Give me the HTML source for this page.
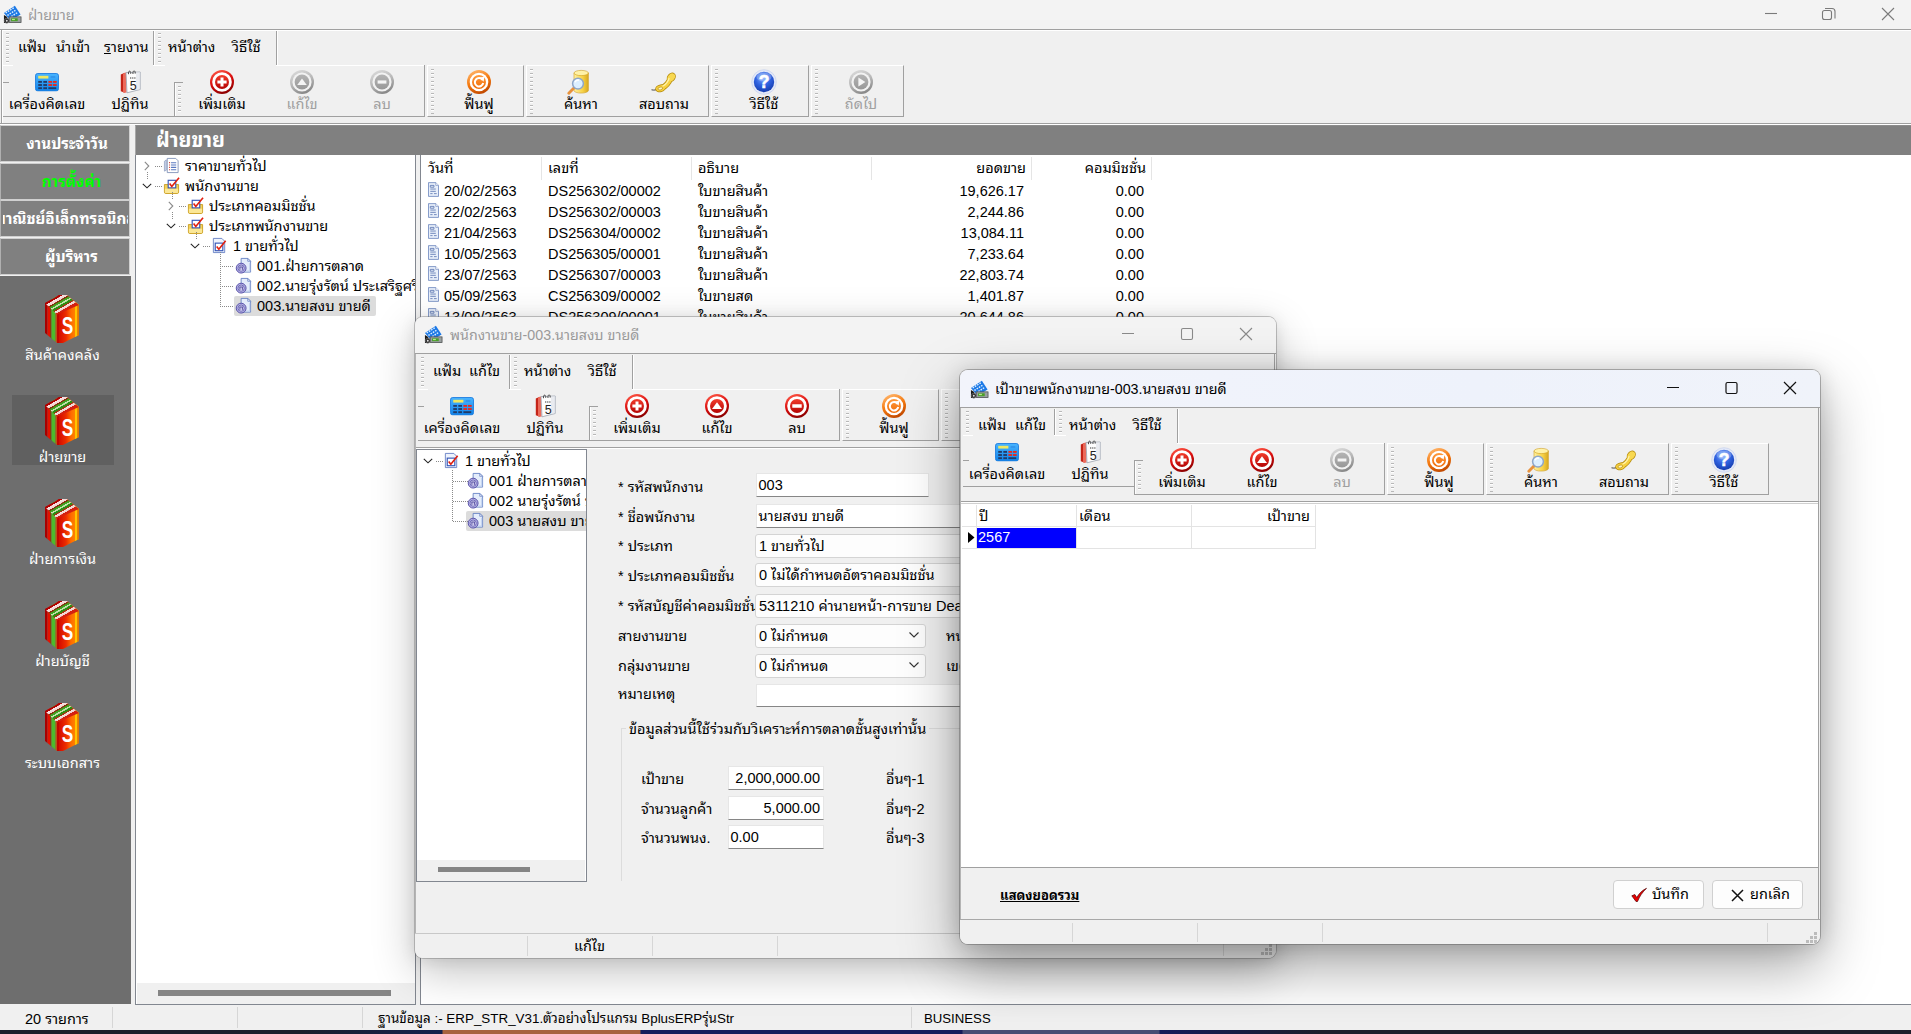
<!DOCTYPE html>
<html lang="th"><head><meta charset="utf-8"><title>ฝ่ายขาย</title>
<style>
*{box-sizing:border-box}
html,body{margin:0;padding:0}
body{width:1911px;height:1034px;overflow:hidden;background:#f0f0f0;position:relative;
 font-family:"Liberation Sans","Noto Sans Thai Looped","Loma","Tahoma",sans-serif;font-size:14.5px;color:#000;line-height:18px}
.a{position:absolute}
.t{position:absolute;white-space:nowrap;line-height:20px;height:20px}
.c{text-align:center}
.r{text-align:right}
.b{font-weight:bold}
.hl{position:absolute;height:1px}
.vl{position:absolute;width:1px}
.g{background:#a0a0a0}.w{background:#fff}
.grip{position:absolute;width:3px;background-image:repeating-linear-gradient(180deg,#b8b8b8 0 1px,#fff 1px 2px,transparent 2px 4px)}
.sec{position:absolute;border-top:1px solid #fff;border-left:1px solid #fff;border-right:1px solid #a0a0a0;border-bottom:1px solid #a0a0a0}
.tb{position:absolute;width:90px;text-align:center;white-space:nowrap;line-height:18px}
.dis{color:#a0a0a0}
.win{position:absolute;border-radius:8px;background:#f0f0f0;box-shadow:0 0 0 1px rgba(90,90,90,.45),0 22px 58px rgba(0,0,0,.36),0 2px 22px rgba(0,0,0,.16);overflow:hidden}
.win.ina{box-shadow:0 0 0 1px rgba(110,110,110,.4),0 14px 44px rgba(0,0,0,.24),0 2px 16px rgba(0,0,0,.10)}
.cmb{border:1px solid #d4d4d4 !important;border-radius:3px;background:#fdfdfd !important;padding-left:3px !important}
.fld{position:absolute;background:#fff;border:1px solid #e6e6e6;border-bottom:1px solid #868686;height:24px;line-height:23px;padding-left:1.5px;white-space:nowrap;overflow:hidden}
.sbd{position:absolute;width:1px;background:#d6d6d6}
.btn{position:absolute;height:29px;background:#fdfdfd;border:1px solid #d0d0d0;border-radius:4px;line-height:27px;white-space:nowrap}
.sbtn{position:absolute;left:0;width:130px;height:37px;background:#808080;border:1px solid #d0d0d0;border-left-color:#b0b0b0;color:#fff;font-weight:bold;font-size:15.2px;line-height:35px;text-align:center;white-space:nowrap;overflow:hidden}
.lbl{position:absolute;left:0;width:125px;text-align:center;color:#fff;font-size:14.5px;white-space:nowrap;line-height:20px}
.tr{position:absolute;white-space:nowrap;line-height:20px;height:20px}
svg{position:absolute;overflow:visible}
</style></head>
<body>

<svg width="0" height="0" style="position:absolute">
<defs>
<linearGradient id="gRed" x1="0.2" y1="0" x2="0.6" y2="1"><stop offset="0" stop-color="#ff5a48"/><stop offset=".5" stop-color="#d80c0c"/><stop offset="1" stop-color="#8a0000"/></linearGradient>
<linearGradient id="gRed2" x1="0" y1="0" x2="0" y2="1"><stop offset="0" stop-color="#f23c2c"/><stop offset="1" stop-color="#b40404"/></linearGradient>
<linearGradient id="gGray2" x1="0" y1="0" x2="0" y2="1"><stop offset="0" stop-color="#b4b4b4"/><stop offset="1" stop-color="#989898"/></linearGradient>
<linearGradient id="gOr2" x1="0" y1="0" x2="0" y2="1"><stop offset="0" stop-color="#ff9a3c"/><stop offset="1" stop-color="#f06c08"/></linearGradient>
<linearGradient id="gGray" x1="0.2" y1="0" x2="0.6" y2="1"><stop offset="0" stop-color="#dcdcdc"/><stop offset=".5" stop-color="#b8b8b8"/><stop offset="1" stop-color="#868686"/></linearGradient>
<linearGradient id="gOr" x1="0.2" y1="0" x2="0.6" y2="1"><stop offset="0" stop-color="#ffb870"/><stop offset=".5" stop-color="#f57a10"/><stop offset="1" stop-color="#c04800"/></linearGradient>
<radialGradient id="gBlue" cx="45%" cy="30%" r="75%"><stop offset="0" stop-color="#7aa8ff"/><stop offset=".5" stop-color="#2f62e0"/><stop offset="1" stop-color="#1238a8"/></radialGradient>
<linearGradient id="gCalc" x1="0" y1="0" x2="0" y2="1"><stop offset="0" stop-color="#49b4ff"/><stop offset="1" stop-color="#1183e8"/></linearGradient>
<linearGradient id="gCyl" x1="0" y1="0" x2="1" y2="0"><stop offset="0" stop-color="#fff0a0"/><stop offset=".6" stop-color="#f7d247"/><stop offset="1" stop-color="#d8a820"/></linearGradient>
<linearGradient id="gBk1" x1="0" y1="0" x2="1" y2="0"><stop offset="0" stop-color="#d40c00"/><stop offset=".35" stop-color="#ec2c00"/><stop offset=".6" stop-color="#ff6a00"/><stop offset="1" stop-color="#ff9800"/></linearGradient>
<linearGradient id="gBkTop" gradientUnits="userSpaceOnUse" x1="7" y1="4" x2="14.700" y2="17.500"><stop offset="0" stop-color="#b00000"/><stop offset=".12" stop-color="#b00000"/><stop offset=".13" stop-color="#f8e4e4"/><stop offset=".3" stop-color="#f4d0d0"/><stop offset=".31" stop-color="#80340c"/><stop offset=".38" stop-color="#80340c"/><stop offset=".39" stop-color="#3c9c1c"/><stop offset=".5" stop-color="#44a824"/><stop offset=".51" stop-color="#cfeac0"/><stop offset=".6" stop-color="#a8d890"/><stop offset=".61" stop-color="#2c8c14"/><stop offset=".72" stop-color="#2c8c14"/><stop offset=".73" stop-color="#a43410"/><stop offset=".79" stop-color="#a43410"/><stop offset=".8" stop-color="#f8e4e4"/><stop offset=".94" stop-color="#f0c8c8"/><stop offset=".95" stop-color="#d42010"/><stop offset="1" stop-color="#d42010"/></linearGradient>
</defs>
<symbol id="i-add" viewBox="0 0 26 26"><circle cx="13" cy="13" r="12" fill="url(#gRed)"/><circle cx="13" cy="13" r="9.800" fill="#fff"/><circle cx="13" cy="13" r="7" fill="url(#gRed2)"/><path d="M8.400 13h9.200M13 8.400v9.200" stroke="#fff" stroke-width="3"/></symbol>
<symbol id="i-edit" viewBox="0 0 26 26"><circle cx="13" cy="13" r="12" fill="url(#gRed)"/><circle cx="13" cy="13" r="9.800" fill="#fff"/><circle cx="13" cy="13" r="7" fill="url(#gRed2)"/><path d="M8 16L13 9.200 18 16z" fill="#fff"/></symbol>
<symbol id="i-del" viewBox="0 0 26 26"><circle cx="13" cy="13" r="12" fill="url(#gRed)"/><circle cx="13" cy="13" r="9.800" fill="#fff"/><circle cx="13" cy="13" r="7" fill="url(#gRed2)"/><path d="M8.300 13h9.400" stroke="#fff" stroke-width="3.400"/></symbol>
<symbol id="i-editg" viewBox="0 0 26 26"><circle cx="13" cy="13" r="12" fill="url(#gGray)"/><circle cx="13" cy="13" r="9.600" fill="#f2f2f2"/><circle cx="13" cy="13" r="7.400" fill="url(#gGray2)"/><path d="M8.200 16L13 9.400l4.800 6.600z" fill="#f4f4f4"/></symbol>
<symbol id="i-delg" viewBox="0 0 26 26"><circle cx="13" cy="13" r="12" fill="url(#gGray)"/><circle cx="13" cy="13" r="9.600" fill="#f2f2f2"/><circle cx="13" cy="13" r="7.400" fill="url(#gGray2)"/><path d="M8.600 13h8.800" stroke="#f4f4f4" stroke-width="3.200"/></symbol>
<symbol id="i-nextg" viewBox="0 0 26 26"><circle cx="13" cy="13" r="12" fill="url(#gGray)"/><circle cx="13" cy="13" r="9.600" fill="#f2f2f2"/><circle cx="13" cy="13" r="7.400" fill="url(#gGray2)"/><path d="M10.400 8.400L17.400 13l-7 4.600z" fill="#f4f4f4"/></symbol>
<symbol id="i-refresh" viewBox="0 0 26 26"><circle cx="13" cy="13" r="12" fill="url(#gOr)"/><circle cx="13" cy="13" r="9.300" fill="#fff"/><circle cx="13" cy="13" r="7" fill="url(#gOr2)"/><path d="M16.600 11A4.200 4.200 0 1 0 17.200 14" fill="none" stroke="#fff" stroke-width="2"/><path d="M13.400 8.600l5-.8-.8 5z" fill="#fff"/></symbol>
<symbol id="i-help" viewBox="0 0 26 26"><circle cx="13" cy="13" r="12.300" fill="#e2e8f8" stroke="#ccd4ee" stroke-width=".8"/><circle cx="13" cy="13" r="10.200" fill="url(#gBlue)"/><ellipse cx="13" cy="8" rx="7.500" ry="4.500" fill="#fff" opacity=".25"/><text x="13" y="19.300" text-anchor="middle" font-family="Liberation Sans, sans-serif" font-weight="bold" font-size="17.500" fill="#fff" stroke="#fff" stroke-width=".5">?</text></symbol>
<symbol id="i-calc" viewBox="0 0 26 20"><rect x=".5" y=".5" width="25" height="19" rx="2.5" fill="url(#gCalc)" stroke="#1f7fe0"/><rect x="3.5" y="3" width="11" height="3" fill="#f0e860"/><rect x="17" y="3.5" width="5" height="1.6" fill="#3090e8"/><g fill="#223a66"><rect x="3.5" y="8.6" width="4" height="2"/><rect x="9" y="8.6" width="4" height="2"/><rect x="3.5" y="12" width="4" height="2"/><rect x="9" y="12" width="4" height="2"/><rect x="3.5" y="15.4" width="4" height="2"/><rect x="9" y="15.4" width="4" height="2"/><rect x="14.5" y="15.4" width="8.5" height="2"/></g><g fill="#e8281c"><rect x="14.5" y="8.6" width="4" height="2"/><rect x="19.5" y="8.6" width="4" height="2"/><rect x="14.5" y="12" width="4" height="2"/><rect x="19.5" y="12" width="4" height="2"/></g></symbol>
<symbol id="i-cal" viewBox="0 0 21 24"><path d="M.8 4.500l4-1.800v20l-4-1.400z" fill="#c42418"/><path d="M3 3.600l3.500-1.400v20.500L3 22.500z" fill="#ec6a5a"/><path d="M6 2.600L20.200 2v17.500L7 22.800z" fill="#fdfdfd" stroke="#9aa2ae" stroke-width=".8"/><path d="M20 2v17.300l-4 1V2.200z" fill="#dfe3ea" opacity=".7"/><path d="M8.500 4.200c-.8-4 2.800-4 2.200-.4M13 4c-.8-4 2.800-4 2.200-.4" stroke="#444" stroke-width="1" fill="none"/><text x="13.300" y="19.500" text-anchor="middle" font-family="Liberation Sans, sans-serif" font-size="12.500" fill="#222">5</text><path d="M10 8h6" stroke="#777" stroke-width="1.600" stroke-dasharray="1.300 .8"/></symbol>
<symbol id="i-search" viewBox="0 0 24 26"><path d="M7 4v17.500a7.200 2.600 0 0 0 14.400 0V4z" fill="url(#gCyl)" stroke="#d0a020" stroke-width=".6"/><ellipse cx="14.200" cy="4" rx="7.200" ry="2.600" fill="#fff2a8" stroke="#d0a020" stroke-width=".6"/><path d="M1.800 24.300l5.400-5.600" stroke="#e8923c" stroke-width="2.800" stroke-linecap="round"/><circle cx="11" cy="14.600" r="5.400" fill="#dcefff" stroke="#8ea6c8" stroke-width="1.500"/><path d="M8 13.200a3.400 3.400 0 0 1 4-2" stroke="#fff" stroke-width="1.500" fill="none"/></symbol>
<symbol id="i-phone" viewBox="0 0 26 21"><path d="M.5 17.800c2.500.6 4.500.2 6.500-.8" stroke="#333" stroke-width=".9" fill="none"/><g stroke="#b48a0c" stroke-width="1.600" stroke-linejoin="round"><path d="M10 16.500Q17 13.500 19.500 6" stroke-width="5.600" stroke-linecap="round" fill="none"/><ellipse cx="9.500" cy="16.300" rx="4.600" ry="3" transform="rotate(-15 9.500 16.300)" fill="#b48a0c"/><ellipse cx="20.300" cy="5.300" rx="4.300" ry="3.300" transform="rotate(-50 20.300 5.300)" fill="#b48a0c"/></g><path d="M10 16.500Q17 13.500 19.500 6" stroke="#f6d040" stroke-width="4" stroke-linecap="round" fill="none"/><ellipse cx="9.500" cy="16.300" rx="4.600" ry="3" transform="rotate(-15 9.500 16.300)" fill="#f6d040"/><ellipse cx="20.300" cy="5.300" rx="4.300" ry="3.300" transform="rotate(-50 20.300 5.300)" fill="#f8d850"/><path d="M12 14Q16.500 11.500 18 6.500" stroke="#fff2a8" stroke-width="1.300" stroke-linecap="round" fill="none"/><ellipse cx="9.300" cy="16.500" rx="2.400" ry="1.400" transform="rotate(-15 9.300 16.500)" fill="#fff6c0" stroke="#b48a0c" stroke-width=".6"/></symbol>
<symbol id="i-app" viewBox="0 0 20 20"><path d="M1 8.500L12.500.8l6 9.200L8 16.500z" fill="#1b78e6"/><path d="M2.800 8.400l9.400-6M4.600 11l9.400-6M6.400 13.600l9.400-6" stroke="#d8ecff" stroke-width="1.500" stroke-dasharray="1.700 1.100"/><rect x="6.500" y="12.500" width="12.500" height="6" fill="#9aa0a0" stroke="#4a4e4e" stroke-width=".8"/><rect x="8.500" y="14" width="7" height="3" fill="#4aa028"/><rect x="9.500" y="14.600" width="3" height="1.300" fill="#b8e890"/><path d="M1 10.500l3.500 2v6.500H1z" fill="#1a1a1a"/><circle cx="4" cy="16.500" r="2.600" fill="#2a2a2a" stroke="#777" stroke-width=".7"/><circle cx="4" cy="16.500" r="1" fill="#ddd"/></symbol>
<symbol id="i-books" viewBox="0 0 34 48"><clipPath id="cBk"><path d="M0 8L14 0h8l12 10v30L18 48h-6L0 38z"/></clipPath><g clip-path="url(#cBk)"><rect x="0" y="0" width="2.500" height="48" fill="#a80000"/><rect x="2.500" y="0" width="2.500" height="48" fill="#e41200"/><rect x="5" y="0" width="1.500" height="48" fill="#8a3a10"/><rect x="6.500" y="0" width="4" height="48" fill="#4cba2c"/><rect x="10.500" y="0" width="1.500" height="48" fill="#b45a14"/><rect x="12" y="0" width="2" height="48" fill="#c40400"/><rect x="14" y="0" width="20" height="48" fill="url(#gBk1)"/><rect x="30" y="0" width="2.300" height="48" fill="#ffc400"/><rect x="32.300" y="0" width="1.700" height="48" fill="#e27a00"/><path d="M0 8L14 0h8l12 10L12 19.500z" fill="url(#gBkTop)"/><path d="M0 38l12 10h-6L0 43zM34 40L18 48h8l8-4z" fill="#6e6e6e" opacity="0"/></g><text transform="translate(22.500 38.500) scale(.72 1)" text-anchor="middle" font-family="Liberation Sans, sans-serif" font-weight="bold" font-size="24" fill="#fff">S</text></symbol>
<symbol id="t-list" viewBox="0 0 18 18"><path d="M1.500 4.500l2-1.500v11l-2 1z" fill="#c8d4ea" stroke="#7a8cb4" stroke-width=".6"/><path d="M4.500 1.500h9l2.500 2.500v12.500h-11.500z" fill="#fff" stroke="#7a8cb4" stroke-width=".9"/><path d="M6.500 6h1M6.500 8.500h1M6.500 11h1M6.500 13.500h1" stroke="#d03020" stroke-width="1.200"/><path d="M8.500 6h5.500M8.500 8.500h5.500M8.500 11h5.500M8.500 13.500h5.500" stroke="#5878c0" stroke-width="1.100"/></symbol>
<symbol id="t-fold" viewBox="0 0 18 18"><path d="M1.500 8h15v8a1.500 1.500 0 0 1-1.500 1.500h-12a1.500 1.500 0 0 1-1.500-1.500z" fill="#f4d25a" stroke="#c89a18" stroke-width=".9"/><path d="M2 12.500h14v3.500a1 1 0 0 1-1 1H3a1 1 0 0 1-1-1z" fill="#fbe796"/><rect x="5.500" y="3.500" width="8" height="8" fill="#fff" stroke="#3456b8" stroke-width="1.200"/><path d="M7 7l2.300 3L17 .8" stroke="#e02010" stroke-width="1.700" fill="none"/></symbol>
<symbol id="t-chk" viewBox="0 0 18 18"><path d="M2.500 1.500h9l3 3v12h-12z" fill="#eef3fc" stroke="#5e78c0" stroke-width=".9"/><rect x="4.500" y="6.500" width="8" height="8" fill="#fff" stroke="#3456b8" stroke-width="1.200"/><path d="M6 10l2.300 3L15.500 4" stroke="#e02010" stroke-width="1.700" fill="none"/></symbol>
<symbol id="t-emp" viewBox="0 0 18 18"><path d="M6.500 1.500h7l3 3v11.500h-10z" fill="#e4edfb" stroke="#5f7cc0" stroke-width=".9"/><path d="M13.500 1.500v3h3z" fill="#fff" stroke="#5f7cc0" stroke-width=".8"/><path d="M8 15h7.500V6" stroke="#c4d4f0" stroke-width="1.200" fill="none"/><circle cx="6.500" cy="11.800" r="5.200" fill="#b4b0e4" stroke="#544ea6" stroke-width="1"/><circle cx="6.500" cy="11.800" r="3.300" fill="#dcdaf6" stroke="#544ea6" stroke-width=".8"/><path d="M5.200 13.600v-2.800M7.800 13.600v-2.800M4.600 10.600h3.800" stroke="#3c3490" stroke-width=".9"/></symbol>
<symbol id="t-doc" viewBox="0 0 12 16"><path d="M.5.500h8l3 3v12H.5z" fill="#e8effa" stroke="#6a84bc" stroke-width=".9"/><path d="M8.500.500v3h3" fill="#fff" stroke="#6a84bc" stroke-width=".7"/><path d="M2.500 3.500h4v2h-4zM2.500 7.500h6M2.500 10h6M2.500 12.500h2.500M6.500 12.500h3" stroke="#5a74b0" stroke-width=".9" fill="none"/></symbol>
</defs>
</svg>

<div class="a" style="left:0;top:0;width:1911px;height:29px;background:#f3f3f3"></div>
<svg style="left:3px;top:5px" width="19" height="19"><use href="#i-app"/></svg>
<div class="t " style="left:28px;top:5px;color:#9a9a9a;font-size:14.25px">ฝ่ายขาย</div>
<svg style="left:1760px;top:0" width="151" height="29" fill="none" stroke="#7a7a7a" stroke-width="1.1"><path d="M5 13.5h12"/><rect x="62.5" y="10.5" width="9" height="9" rx="2"/><path d="M65 8.500h7a3 3 0 0 1 3 3v7"/><path d="M122 8l12 12M134 8l-12 12"/></svg>
<div class="hl g" style="left:0px;top:29px;width:1911px"></div><div class="hl w" style="left:0px;top:30px;width:1911px"></div>
<div class="vl g" style="left:1px;top:30px;height:95px"></div><div class="vl w" style="left:2px;top:31px;height:94px"></div>
<div class="grip" style="left:6px;top:33px;height:30px"></div><div class="t " style="left:18px;top:37px;">แฟ้ม</div><div class="t " style="left:56px;top:37px;">นำเข้า</div><div class="t " style="left:104px;top:37px;"><u>ร</u>ายงาน</div><div class="vl g" style="left:153px;top:31px;height:34px"></div><div class="vl w" style="left:154px;top:31px;height:34px"></div><div class="grip" style="left:158px;top:33px;height:30px"></div><div class="t " style="left:168px;top:37px;">หน้าต่าง</div><div class="t " style="left:232px;top:37px;">วิธีใช้</div><div class="vl g" style="left:276px;top:31px;height:34px"></div><div class="vl w" style="left:277px;top:31px;height:34px"></div><div class="hl w" style="left:3px;top:65px;width:10px"></div><div class="hl w" style="left:153px;top:65px;width:12px"></div><div class="hl g" style="left:3px;top:82px;width:6px"></div><svg style="left:35.0px;top:72.8px" width="24" height="18.5"><use href="#i-calc"/></svg><div class="tb" style="left:2px;top:95px">เครื่องคิดเลข</div><svg style="left:119.5px;top:70.0px" width="21" height="24"><use href="#i-cal"/></svg><div class="tb" style="left:85px;top:95px">ปฏิทิน</div><div class="hl g" style="left:3px;top:116px;width:171px"></div><div class="vl g" style="left:174px;top:82px;height:35px"></div><div class="hl g" style="left:174px;top:82px;width:9px"></div><div class="vl w" style="left:175px;top:83px;height:33px"></div><div class="grip" style="left:178px;top:86px;height:28px"></div><div class="hl w" style="left:276px;top:65px;width:148px"></div><div class="hl g" style="left:174px;top:116px;width:251px"></div><div class="vl g" style="left:424px;top:65px;height:52px"></div><svg style="left:209.0px;top:69.0px" width="26" height="26"><use href="#i-add"/></svg><div class="tb" style="left:177px;top:95px">เพิ่มเติม</div><svg style="left:289.0px;top:69.0px" width="26" height="26"><use href="#i-editg"/></svg><div class="tb dis" style="left:257px;top:95px">แก้ไข</div><svg style="left:369.0px;top:69.0px" width="26" height="26"><use href="#i-delg"/></svg><div class="tb dis" style="left:337px;top:95px">ลบ</div><div class="sec" style="left:427px;top:65px;width:97px;height:52px"></div><div class="grip" style="left:431px;top:69px;height:45px"></div><svg style="left:466.0px;top:69.0px" width="26" height="26"><use href="#i-refresh"/></svg><div class="tb" style="left:434px;top:95px">ฟื้นฟู</div><div class="sec" style="left:526px;top:65px;width:183px;height:52px"></div><div class="grip" style="left:530px;top:69px;height:45px"></div><svg style="left:567.0px;top:69.0px" width="24" height="26"><use href="#i-search"/></svg><div class="tb" style="left:536px;top:95px">ค้นหา</div><svg style="left:651.0px;top:72.0px" width="26" height="21"><use href="#i-phone"/></svg><div class="tb" style="left:619px;top:95px">สอบถาม</div><div class="sec" style="left:711px;top:65px;width:98px;height:52px"></div><div class="grip" style="left:715px;top:69px;height:45px"></div><svg style="left:751.0px;top:69.0px" width="26" height="26"><use href="#i-help"/></svg><div class="tb" style="left:719px;top:95px">วิธีใช้</div><div class="sec" style="left:811px;top:65px;width:93px;height:52px"></div><div class="grip" style="left:815px;top:69px;height:45px"></div><svg style="left:848.0px;top:69.0px" width="26" height="26"><use href="#i-nextg"/></svg><div class="tb dis" style="left:816px;top:95px">ถัดไป</div>
<div class="hl g" style="left:0px;top:123px;width:1911px"></div><div class="hl w" style="left:0px;top:124px;width:1911px"></div>
<div class="a" style="left:0;top:125px;width:131px;height:879px;background:#6e6e6e"></div>
<div class="a" style="left:0;top:125px;width:131px;height:151px;background:#f0f0f0"></div>
<div class="sbtn" style="top:125px;color:#fff;padding-left:4px">งานประจำวัน</div>
<div class="sbtn" style="top:163px;color:#0f0;padding-left:13px">การตั้งค่า</div>
<div class="sbtn" style="top:200px;color:#fff;padding-left:0px"><div class="a" style="left:2px;top:0;width:125px;height:35px;overflow:hidden"><span style="position:absolute;left:-8.5px;top:0">พาณิชย์อิเล็กทรอนิกส์</span></div></div>
<div class="sbtn" style="top:238px;color:#fff;padding-left:13px">ผู้บริหาร</div>
<div class="a" style="left:12px;top:395px;width:102px;height:70px;background:#606060"></div>
<svg style="left:45px;top:295px" width="34" height="48"><use href="#i-books"/></svg>
<div class="lbl" style="top:345px">สินค้าคงคลัง</div>
<svg style="left:45px;top:397px" width="34" height="48"><use href="#i-books"/></svg>
<div class="lbl" style="top:447px">ฝ่ายขาย</div>
<svg style="left:45px;top:499px" width="34" height="48"><use href="#i-books"/></svg>
<div class="lbl" style="top:549px">ฝ่ายการเงิน</div>
<svg style="left:45px;top:601px" width="34" height="48"><use href="#i-books"/></svg>
<div class="lbl" style="top:651px">ฝ่ายบัญชี</div>
<svg style="left:45px;top:703px" width="34" height="48"><use href="#i-books"/></svg>
<div class="lbl" style="top:753px">ระบบเอกสาร</div>
<div class="a" style="left:135px;top:125px;width:1776px;height:30px;background:#808080;border-left:1px solid #a8a8a8;border-top:1px solid #8c8c8c"></div>
<div class="t b" style="left:156px;top:130px;color:#fff;font-size:20px;line-height:24px;height:24px;top:128px">ฝ่ายขาย</div>
<div class="a" style="left:135px;top:155px;width:281px;height:850px;background:#fff;border:1px solid #828790;border-top:none"></div>
<div class="a" style="left:137px;top:983px;width:278px;height:21px;background:#f0f0f0"></div>
<div class="a" style="left:158px;top:990px;width:233px;height:6px;background:#858585"></div>
<div class="a" style="left:137px;top:155px;width:278px;height:828px;overflow:hidden"><svg style="left:7px;top:6px" width="6" height="10" fill="none" stroke="#8a8a8a" stroke-width="1.1"><path d="M.8.8l4 4.200-4 4.200"/></svg><div class="a" style="left:18px;top:11px;width:8px;height:1px;background-image:repeating-linear-gradient(90deg,#8a8a8a 0 1px,transparent 1px 2px)"></div><svg style="left:26px;top:2px" width="17" height="17"><use href="#t-list"/></svg><div class="tr" style="left:48px;top:1px">ราคาขายทั่วไป</div><svg style="left:5px;top:28px" width="10" height="6" fill="none" stroke="#222" stroke-width="1.1"><path d="M.8.8l4.200 4 4.200-4"/></svg><div class="a" style="left:18px;top:31px;width:8px;height:1px;background-image:repeating-linear-gradient(90deg,#8a8a8a 0 1px,transparent 1px 2px)"></div><svg style="left:26px;top:22px" width="17" height="17"><use href="#t-fold"/></svg><div class="tr" style="left:48px;top:21px">พนักงานขาย</div><svg style="left:31px;top:46px" width="6" height="10" fill="none" stroke="#8a8a8a" stroke-width="1.1"><path d="M.8.8l4 4.200-4 4.200"/></svg><div class="a" style="left:42px;top:51px;width:8px;height:1px;background-image:repeating-linear-gradient(90deg,#8a8a8a 0 1px,transparent 1px 2px)"></div><svg style="left:50px;top:42px" width="17" height="17"><use href="#t-fold"/></svg><div class="tr" style="left:72px;top:41px">ประเภทคอมมิชชั่น</div><svg style="left:29px;top:68px" width="10" height="6" fill="none" stroke="#222" stroke-width="1.1"><path d="M.8.8l4.200 4 4.200-4"/></svg><div class="a" style="left:42px;top:71px;width:8px;height:1px;background-image:repeating-linear-gradient(90deg,#8a8a8a 0 1px,transparent 1px 2px)"></div><svg style="left:50px;top:62px" width="17" height="17"><use href="#t-fold"/></svg><div class="tr" style="left:72px;top:61px">ประเภทพนักงานขาย</div><svg style="left:53px;top:88px" width="10" height="6" fill="none" stroke="#222" stroke-width="1.1"><path d="M.8.8l4.200 4 4.200-4"/></svg><div class="a" style="left:66px;top:91px;width:8px;height:1px;background-image:repeating-linear-gradient(90deg,#8a8a8a 0 1px,transparent 1px 2px)"></div><svg style="left:74px;top:82px" width="17" height="17"><use href="#t-chk"/></svg><div class="tr" style="left:96px;top:81px">1 ขายทั่วไป</div><div class="a" style="left:83px;top:111px;width:14px;height:1px;background-image:repeating-linear-gradient(90deg,#8a8a8a 0 1px,transparent 1px 2px)"></div><svg style="left:98px;top:102px" width="17" height="17"><use href="#t-emp"/></svg><div class="tr" style="left:120px;top:101px">001.ฝ่ายการตลาด</div><div class="a" style="left:83px;top:131px;width:14px;height:1px;background-image:repeating-linear-gradient(90deg,#8a8a8a 0 1px,transparent 1px 2px)"></div><svg style="left:98px;top:122px" width="17" height="17"><use href="#t-emp"/></svg><div class="tr" style="left:120px;top:121px">002.นายรุ่งรัตน์ ประเสริฐศรี</div><div class="a" style="left:83px;top:151px;width:14px;height:1px;background-image:repeating-linear-gradient(90deg,#8a8a8a 0 1px,transparent 1px 2px)"></div><div class="a" style="left:97px;top:141px;width:142px;height:20px;background:#dcdcdc;border-radius:2px"></div><svg style="left:98px;top:142px" width="17" height="17"><use href="#t-emp"/></svg><div class="tr" style="left:120px;top:141px">003.นายสงบ ขายดี</div><div class="a" style="left:10px;top:17px;width:1px;height:8px;background-image:repeating-linear-gradient(180deg,#8a8a8a 0 1px,transparent 1px 2px)"></div><div class="a" style="left:35px;top:37px;width:1px;height:8px;background-image:repeating-linear-gradient(180deg,#8a8a8a 0 1px,transparent 1px 2px)"></div><div class="a" style="left:35px;top:57px;width:1px;height:8px;background-image:repeating-linear-gradient(180deg,#8a8a8a 0 1px,transparent 1px 2px)"></div><div class="a" style="left:59px;top:77px;width:1px;height:8px;background-image:repeating-linear-gradient(180deg,#8a8a8a 0 1px,transparent 1px 2px)"></div><div class="a" style="left:83px;top:97px;width:1px;height:54px;background-image:repeating-linear-gradient(180deg,#8a8a8a 0 1px,transparent 1px 2px)"></div></div>
<div class="a" style="left:420px;top:155px;width:1491px;height:850px;background:#fff;border-left:1px solid #828790;border-bottom:1px solid #828790"></div>
<div class="vl" style="background:#e5e5e5;left:541px;top:157px;height:23px"></div>
<div class="vl" style="background:#e5e5e5;left:691px;top:157px;height:23px"></div>
<div class="vl" style="background:#e5e5e5;left:871px;top:157px;height:23px"></div>
<div class="vl" style="background:#e5e5e5;left:1031px;top:157px;height:23px"></div>
<div class="vl" style="background:#e5e5e5;left:1151px;top:157px;height:23px"></div>
<div class="t " style="left:428px;top:158px;">วันที่</div><div class="t " style="left:548px;top:158px;">เลขที่</div><div class="t " style="left:698px;top:158px;">อธิบาย</div><div class="t r" style="left:926px;top:158px;width:100px;">ยอดขาย</div><div class="t r" style="left:1046px;top:158px;width:100px;">คอมมิชชั่น</div>
<svg style="left:428px;top:182px" width="11" height="15"><use href="#t-doc"/></svg>
<div class="t " style="left:444px;top:181px;">20/02/2563</div><div class="t " style="left:548px;top:181px;">DS256302/00002</div><div class="t " style="left:698px;top:181px;">ใบขายสินค้า</div><div class="t r" style="left:924px;top:181px;width:100px;">19,626.17</div><div class="t r" style="left:1044px;top:181px;width:100px;">0.00</div>
<svg style="left:428px;top:203px" width="11" height="15"><use href="#t-doc"/></svg>
<div class="t " style="left:444px;top:202px;">22/02/2563</div><div class="t " style="left:548px;top:202px;">DS256302/00003</div><div class="t " style="left:698px;top:202px;">ใบขายสินค้า</div><div class="t r" style="left:924px;top:202px;width:100px;">2,244.86</div><div class="t r" style="left:1044px;top:202px;width:100px;">0.00</div>
<svg style="left:428px;top:224px" width="11" height="15"><use href="#t-doc"/></svg>
<div class="t " style="left:444px;top:223px;">21/04/2563</div><div class="t " style="left:548px;top:223px;">DS256304/00002</div><div class="t " style="left:698px;top:223px;">ใบขายสินค้า</div><div class="t r" style="left:924px;top:223px;width:100px;">13,084.11</div><div class="t r" style="left:1044px;top:223px;width:100px;">0.00</div>
<svg style="left:428px;top:245px" width="11" height="15"><use href="#t-doc"/></svg>
<div class="t " style="left:444px;top:244px;">10/05/2563</div><div class="t " style="left:548px;top:244px;">DS256305/00001</div><div class="t " style="left:698px;top:244px;">ใบขายสินค้า</div><div class="t r" style="left:924px;top:244px;width:100px;">7,233.64</div><div class="t r" style="left:1044px;top:244px;width:100px;">0.00</div>
<svg style="left:428px;top:266px" width="11" height="15"><use href="#t-doc"/></svg>
<div class="t " style="left:444px;top:265px;">23/07/2563</div><div class="t " style="left:548px;top:265px;">DS256307/00003</div><div class="t " style="left:698px;top:265px;">ใบขายสินค้า</div><div class="t r" style="left:924px;top:265px;width:100px;">22,803.74</div><div class="t r" style="left:1044px;top:265px;width:100px;">0.00</div>
<svg style="left:428px;top:287px" width="11" height="15"><use href="#t-doc"/></svg>
<div class="t " style="left:444px;top:286px;">05/09/2563</div><div class="t " style="left:548px;top:286px;">CS256309/00002</div><div class="t " style="left:698px;top:286px;">ใบขายสด</div><div class="t r" style="left:924px;top:286px;width:100px;">1,401.87</div><div class="t r" style="left:1044px;top:286px;width:100px;">0.00</div>
<svg style="left:428px;top:308px" width="11" height="15"><use href="#t-doc"/></svg>
<div class="t " style="left:444px;top:307px;">13/09/2563</div><div class="t " style="left:548px;top:307px;">DS256309/00001</div><div class="t " style="left:698px;top:307px;">ใบขายสินค้า</div><div class="t r" style="left:924px;top:307px;width:100px;">20,644.86</div><div class="t r" style="left:1044px;top:307px;width:100px;">0.00</div>
<div class="a" style="left:0;top:1005px;width:1911px;height:25px;background:#f0f0f0"></div>
<div class="sbd" style="left:112px;top:1007px;height:21px"></div>
<div class="sbd" style="left:237px;top:1007px;height:21px"></div>
<div class="sbd" style="left:362px;top:1007px;height:21px"></div>
<div class="sbd" style="left:911px;top:1007px;height:21px"></div>
<div class="t " style="left:25px;top:1009px;">20 รายการ</div><div class="t " style="left:378px;top:1009px;font-size:13.4px">ฐานข้อมูล :- ERP_STR_V31.ตัวอย่างโปรแกรม BplusERPรุ่นStr</div><div class="t " style="left:924px;top:1009px;font-size:13.2px">BUSINESS</div>
<div class="a" style="left:0;top:1030px;width:1911px;height:4px;background:linear-gradient(90deg,#1a1e2a 0,#1a1e2c 300px,#15224e 442px,#a8623e 443px,#a8623e 640px,#161c5c 641px,#161c5c 962px,#474d74 963px,#474d74 1159px,#141a5a 1160px,#1c1e2a 1320px,#1c1e2a 1911px)"></div>
<div class="win ina" style="left:415px;top:317px;width:861px;height:641px"><div class="a" style="left:0;top:0;width:861px;height:36px;background:#f3f3f3"></div><svg style="left:9px;top:8px" width="19" height="19"><use href="#i-app"/></svg><div class="t " style="left:35px;top:8px;color:#9a9a9a;font-size:14.25px">พนักงานขาย-003.นายสงบ ขายดี</div><svg style="left:700px;top:0" width="161" height="36" fill="none" stroke="#8a8a8a" stroke-width="1.1"><path d="M7 16.500h12"/><rect x="66.500" y="11.500" width="11" height="11" rx="1.500"/><path d="M125 11l12 12M137 11l-12 12"/></svg><div class="hl g" style="left:0px;top:36px;width:861px"></div><div class="vl" style="background:#b4b4b4;left:0;top:37px;height:580px"></div><div class="vl g" style="left:859px;top:37px;height:580px"></div><div class="grip" style="left:6px;top:40px;height:30px"></div><div class="t " style="left:18px;top:44px;">แฟ้ม</div><div class="t " style="left:54px;top:44px;">แก้ไข</div><div class="vl g" style="left:94px;top:38px;height:34px"></div><div class="vl w" style="left:95px;top:38px;height:34px"></div><div class="grip" style="left:99px;top:40px;height:30px"></div><div class="t " style="left:109px;top:44px;">หน้าต่าง</div><div class="t " style="left:173px;top:44px;">วิธีใช้</div><div class="vl g" style="left:217px;top:38px;height:34px"></div><div class="vl w" style="left:218px;top:38px;height:34px"></div><div class="hl w" style="left:3px;top:72px;width:10px"></div><div class="hl w" style="left:94px;top:72px;width:12px"></div><div class="hl g" style="left:3px;top:89px;width:6px"></div><svg style="left:35.0px;top:79.8px" width="24" height="18.5"><use href="#i-calc"/></svg><div class="tb" style="left:2px;top:102px">เครื่องคิดเลข</div><svg style="left:119.5px;top:77.0px" width="21" height="24"><use href="#i-cal"/></svg><div class="tb" style="left:85px;top:102px">ปฏิทิน</div><div class="hl g" style="left:3px;top:123px;width:171px"></div><div class="vl g" style="left:174px;top:89px;height:35px"></div><div class="hl g" style="left:174px;top:89px;width:9px"></div><div class="vl w" style="left:175px;top:90px;height:33px"></div><div class="grip" style="left:178px;top:93px;height:28px"></div><div class="hl w" style="left:217px;top:72px;width:207px"></div><div class="hl g" style="left:174px;top:123px;width:251px"></div><div class="vl g" style="left:424px;top:72px;height:52px"></div><svg style="left:209.0px;top:76.0px" width="26" height="26"><use href="#i-add"/></svg><div class="tb" style="left:177px;top:102px">เพิ่มเติม</div><svg style="left:289.0px;top:76.0px" width="26" height="26"><use href="#i-edit"/></svg><div class="tb" style="left:257px;top:102px">แก้ไข</div><svg style="left:369.0px;top:76.0px" width="26" height="26"><use href="#i-del"/></svg><div class="tb" style="left:337px;top:102px">ลบ</div><div class="sec" style="left:427px;top:72px;width:97px;height:52px"></div><div class="grip" style="left:431px;top:76px;height:45px"></div><svg style="left:466.0px;top:76.0px" width="26" height="26"><use href="#i-refresh"/></svg><div class="tb" style="left:434px;top:102px">ฟื้นฟู</div><div class="sec" style="left:526px;top:72px;width:183px;height:52px"></div><div class="grip" style="left:530px;top:76px;height:45px"></div><svg style="left:567.0px;top:76.0px" width="24" height="26"><use href="#i-search"/></svg><div class="tb" style="left:536px;top:102px">ค้นหา</div><svg style="left:651.0px;top:79.0px" width="26" height="21"><use href="#i-phone"/></svg><div class="tb" style="left:619px;top:102px">สอบถาม</div><div class="sec" style="left:711px;top:72px;width:98px;height:52px"></div><div class="grip" style="left:715px;top:76px;height:45px"></div><svg style="left:751.0px;top:76.0px" width="26" height="26"><use href="#i-help"/></svg><div class="tb" style="left:719px;top:102px">วิธีใช้</div><div class="sec" style="left:811px;top:72px;width:93px;height:52px"></div><div class="grip" style="left:815px;top:76px;height:45px"></div><svg style="left:848.0px;top:76.0px" width="26" height="26"><use href="#i-nextg"/></svg><div class="tb dis" style="left:816px;top:102px">ถัดไป</div><div class="hl g" style="left:1px;top:130px;width:858px"></div><div class="hl w" style="left:1px;top:131px;width:858px"></div><div class="a" style="left:1px;top:132px;width:171px;height:433px;background:#fff;border:1px solid #828790;overflow:hidden"><div class="a" style="left:-1px;top:-1px;width:171px;height:432px"><div class="a" style="left:0;top:411px;width:169px;height:21px;background:#f0f0f0"></div><div class="a" style="left:22px;top:418px;width:92px;height:5px;background:#858585"></div><svg style="left:7px;top:9px" width="10" height="6" fill="none" stroke="#222" stroke-width="1.1"><path d="M.8.8l4.200 4 4.200-4"/></svg><div class="a" style="left:20px;top:12px;width:8px;height:1px;background-image:repeating-linear-gradient(90deg,#8a8a8a 0 1px,transparent 1px 2px)"></div><svg style="left:27px;top:3px" width="17" height="17"><use href="#t-chk"/></svg><div class="tr" style="left:49px;top:2px">1 ขายทั่วไป</div><div class="a" style="left:37px;top:32px;width:16px;height:1px;background-image:repeating-linear-gradient(90deg,#8a8a8a 0 1px,transparent 1px 2px)"></div><svg style="left:51px;top:23px" width="17" height="17"><use href="#t-emp"/></svg><div class="tr" style="left:73px;top:22px">001 ฝ่ายการตลาด</div><div class="a" style="left:37px;top:52px;width:16px;height:1px;background-image:repeating-linear-gradient(90deg,#8a8a8a 0 1px,transparent 1px 2px)"></div><svg style="left:51px;top:43px" width="17" height="17"><use href="#t-emp"/></svg><div class="tr" style="left:73px;top:42px">002 นายรุ่งรัตน์ ประเสริฐศรี</div><div class="a" style="left:50px;top:62px;width:130px;height:20px;background:#dcdcdc;border-radius:2px"></div><div class="a" style="left:37px;top:72px;width:16px;height:1px;background-image:repeating-linear-gradient(90deg,#8a8a8a 0 1px,transparent 1px 2px)"></div><svg style="left:51px;top:63px" width="17" height="17"><use href="#t-emp"/></svg><div class="tr" style="left:73px;top:62px">003 นายสงบ ขายดี</div><div class="a" style="left:36px;top:21px;width:1px;height:52px;background-image:repeating-linear-gradient(180deg,#8a8a8a 0 1px,transparent 1px 2px)"></div></div></div><div class="t" style="left:203px;top:160px;width:137px;overflow:hidden">* รหัสพนักงาน</div><div class="t" style="left:203px;top:190px;width:137px;overflow:hidden">* ชื่อพนักงาน</div><div class="t" style="left:203px;top:219px;width:137px;overflow:hidden">* ประเภท</div><div class="t" style="left:203px;top:249px;width:137px;overflow:hidden">* ประเภทคอมมิชชั่น</div><div class="t" style="left:203px;top:279px;width:137px;overflow:hidden">* รหัสบัญชีค่าคอมมิชชั่น</div><div class="t" style="left:203px;top:309px;width:137px;overflow:hidden">สายงานขาย</div><div class="t" style="left:203px;top:339px;width:137px;overflow:hidden">กลุ่มงานขาย</div><div class="t" style="left:203px;top:367px;width:137px;overflow:hidden">หมายเหตุ</div><div class="fld" style="left:341px;top:156px;width:173px">003</div><div class="fld" style="left:341px;top:187px;width:430px">นายสงบ ขายดี</div><div class="fld cmb" style="left:340px;top:217px;width:430px">1 ขายทั่วไป</div><div class="fld cmb" style="left:340px;top:246px;width:430px">0 ไม่ได้กำหนดอัตราคอมมิชชั่น</div><div class="fld cmb" style="left:340px;top:277px;width:430px">5311210 ค่านายหน้า-การขาย Dealer</div><div class="fld cmb" style="left:340px;top:307px;width:171px;height:24px;line-height:22px">0 ไม่กำหนด</div><svg style="left:494px;top:315px" width="10" height="6" fill="none" stroke="#333" stroke-width="1.1"><path d="M.5.500l4.500 4.500 4.500-4.500"/></svg><div class="fld cmb" style="left:340px;top:337px;width:171px;height:24px;line-height:22px">0 ไม่กำหนด</div><svg style="left:494px;top:345px" width="10" height="6" fill="none" stroke="#333" stroke-width="1.1"><path d="M.5.500l4.500 4.500 4.500-4.500"/></svg><div class="fld" style="left:341px;top:367px;width:430px;height:23px"></div><div class="t " style="left:531px;top:309px;">หน่วยงาน</div><div class="t " style="left:531px;top:339px;">เขตการขาย</div><div class="a" style="left:206px;top:411px;width:600px;height:160px;border:1px solid #dcdcdc"></div><div class="t" style="left:211px;top:402px;background:#f0f0f0;padding:0 3px">ข้อมูลส่วนนี้ใช้ร่วมกับวิเคราะห์การตลาดชั้นสูงเท่านั้น</div><div class="t " style="left:226px;top:452px;">เป้าขาย</div><div class="fld" style="left:313px;top:449px;width:96px;text-align:right;padding-right:3px">2,000,000.00</div><div class="t " style="left:471px;top:452px;">อื่นๆ-1</div><div class="t " style="left:226px;top:482px;">จำนวนลูกค้า</div><div class="fld" style="left:313px;top:479px;width:96px;text-align:right;padding-right:3px">5,000.00</div><div class="t " style="left:471px;top:482px;">อื่นๆ-2</div><div class="t " style="left:226px;top:511px;">จำนวนพนง.</div><div class="fld" style="left:313px;top:508px;width:96px;text-align:left;padding-right:3px">0.00</div><div class="t " style="left:471px;top:511px;">อื่นๆ-3</div><div class="a" style="left:172px;top:564px;width:687px;height:52px;background:#f0f0f0"></div><div class="a" style="left:0;top:616px;width:861px;height:25px;background:#f0f0f0;border-top:1px solid #c8c8c8"></div><div class="sbd" style="left:112px;top:619px;height:20px"></div><div class="sbd" style="left:237px;top:619px;height:20px"></div><div class="sbd" style="left:362px;top:619px;height:20px"></div><div class="sbd" style="left:808px;top:619px;height:20px"></div><div class="t c" style="left:112px;top:619px;width:125px;">แก้ไข</div><svg style="left:846px;top:627px" width="11" height="11" fill="#bcbcbc"><rect x="0" y="8" width="3" height="3"/><rect x="4" y="4" width="3" height="3"/><rect x="4" y="8" width="3" height="3"/><rect x="8" y="0" width="3" height="3"/><rect x="8" y="4" width="3" height="3"/><rect x="8" y="8" width="3" height="3"/></svg></div>
<div class="win" style="left:960px;top:370px;width:860px;height:574px"><div class="a" style="left:0;top:0;width:860px;height:37px;background:linear-gradient(90deg,#f2f4fb,#eef2fb 60%,#f0f3fa)"></div><svg style="left:10px;top:10px" width="19" height="19"><use href="#i-app"/></svg><div class="t " style="left:35px;top:9px;font-size:14.25px">เป้าขายพนักงานขาย-003.นายสงบ ขายดี</div><svg style="left:700px;top:0" width="160" height="37" fill="none" stroke="#111" stroke-width="1.200"><path d="M7 17.500h12"/><rect x="66" y="12.500" width="11" height="11" rx="1.500"/><path d="M124 12l12 12M136 12l-12 12"/></svg><div class="hl g" style="left:0px;top:37px;width:860px"></div><div class="vl" style="background:#b4b4b4;left:0;top:38px;height:520px"></div><div class="vl g" style="left:858px;top:38px;height:520px"></div><div class="grip" style="left:6px;top:41px;height:22px"></div><div class="t " style="left:18px;top:45px;">แฟ้ม</div><div class="t " style="left:55px;top:45px;">แก้ไข</div><div class="vl g" style="left:94px;top:39px;height:26px"></div><div class="vl w" style="left:95px;top:39px;height:26px"></div><div class="grip" style="left:99px;top:41px;height:22px"></div><div class="t " style="left:109px;top:45px;">หน้าต่าง</div><div class="t " style="left:173px;top:45px;">วิธีใช้</div><div class="vl g" style="left:217px;top:39px;height:34px"></div><div class="vl w" style="left:218px;top:39px;height:34px"></div><div class="hl w" style="left:3px;top:65px;width:10px"></div><div class="hl w" style="left:94px;top:65px;width:12px"></div><div class="hl g" style="left:3px;top:90px;width:6px"></div><svg style="left:35.0px;top:72.8px" width="24" height="18.5"><use href="#i-calc"/></svg><div class="tb" style="left:2px;top:95px">เครื่องคิดเลข</div><svg style="left:119.5px;top:70.0px" width="21" height="24"><use href="#i-cal"/></svg><div class="tb" style="left:85px;top:95px">ปฏิทิน</div><div class="hl g" style="left:3px;top:116px;width:171px"></div><div class="vl g" style="left:174px;top:90px;height:35px"></div><div class="hl g" style="left:174px;top:90px;width:9px"></div><div class="vl w" style="left:175px;top:91px;height:33px"></div><div class="grip" style="left:178px;top:94px;height:28px"></div><div class="hl w" style="left:217px;top:73px;width:207px"></div><div class="hl g" style="left:174px;top:124px;width:251px"></div><div class="vl g" style="left:424px;top:73px;height:52px"></div><svg style="left:209.0px;top:77.0px" width="26" height="26"><use href="#i-add"/></svg><div class="tb" style="left:177px;top:103px">เพิ่มเติม</div><svg style="left:289.0px;top:77.0px" width="26" height="26"><use href="#i-edit"/></svg><div class="tb" style="left:257px;top:103px">แก้ไข</div><svg style="left:369.0px;top:77.0px" width="26" height="26"><use href="#i-delg"/></svg><div class="tb dis" style="left:337px;top:103px">ลบ</div><div class="sec" style="left:427px;top:73px;width:97px;height:52px"></div><div class="grip" style="left:431px;top:77px;height:45px"></div><svg style="left:466.0px;top:77.0px" width="26" height="26"><use href="#i-refresh"/></svg><div class="tb" style="left:434px;top:103px">ฟื้นฟู</div><div class="sec" style="left:526px;top:73px;width:183px;height:52px"></div><div class="grip" style="left:530px;top:77px;height:45px"></div><svg style="left:567.0px;top:77.0px" width="24" height="26"><use href="#i-search"/></svg><div class="tb" style="left:536px;top:103px">ค้นหา</div><svg style="left:651.0px;top:80.0px" width="26" height="21"><use href="#i-phone"/></svg><div class="tb" style="left:619px;top:103px">สอบถาม</div><div class="sec" style="left:711px;top:73px;width:98px;height:52px"></div><div class="grip" style="left:715px;top:77px;height:45px"></div><svg style="left:751.0px;top:77.0px" width="26" height="26"><use href="#i-help"/></svg><div class="tb" style="left:719px;top:103px">วิธีใช้</div><div class="hl g" style="left:1px;top:131px;width:857px"></div><div class="hl w" style="left:1px;top:132px;width:857px"></div><div class="a" style="left:1px;top:133px;width:857px;height:365px;background:#fff;border-top:1px solid #d0d0d0"></div><div class="vl" style="left:16px;top:135px;height:43px;background:#e3e3e3"></div><div class="vl" style="left:116px;top:135px;height:43px;background:#e3e3e3"></div><div class="vl" style="left:231px;top:135px;height:43px;background:#e3e3e3"></div><div class="vl" style="left:355px;top:135px;height:43px;background:#e3e3e3"></div><div class="hl" style="left:2px;top:156px;width:354px;background:#e3e3e3"></div><div class="hl" style="left:2px;top:178px;width:354px;background:#e3e3e3"></div><div class="t " style="left:19px;top:136px;">ปี</div><div class="t " style="left:119px;top:136px;">เดือน</div><div class="t r" style="left:250px;top:136px;width:100px;">เป้าขาย</div><svg style="left:8px;top:162px" width="7" height="11"><path d="M0 0l6.500 5.500L0 11z" fill="#000"/></svg><div class="a" style="left:17px;top:158px;width:99px;height:20px;background:#0000ff;color:#fff;line-height:18px;padding-left:1px">2567</div><div class="hl g" style="left:1px;top:497px;width:857px"></div><div class="a" style="left:1px;top:498px;width:857px;height:52px;background:#f0f0f0"></div><div class="t b" style="left:40px;top:516px;font-size:13px"><u>แสดงยอดรวม</u></div><div class="btn" style="left:653px;top:510px;width:91px"><svg style="left:17px;top:7px" width="16" height="14"><path d="M.8 7.800l3-1.300 2 3C8 5.500 11 2.500 15.500.3 11.500 4 8.500 8.500 6.500 13.500H5z" fill="#e80000" stroke="#500" stroke-width=".7"/></svg><span class="a" style="left:38px;top:0">บันทึก</span></div><div class="btn" style="left:752px;top:510px;width:91px"><svg style="left:18px;top:8px" width="13" height="13" fill="none" stroke="#111" stroke-width="1.500"><path d="M1 1l11 11M12 1L1 12"/></svg><span class="a" style="left:37px;top:0">ยกเลิก</span></div><div class="a" style="left:0;top:549px;width:860px;height:25px;background:#f0f0f0;border-top:1px solid #a8a8a8"></div><div class="sbd" style="left:112px;top:553px;height:19px"></div><div class="sbd" style="left:237px;top:553px;height:19px"></div><div class="sbd" style="left:362px;top:553px;height:19px"></div><div class="sbd" style="left:807px;top:553px;height:19px"></div><svg style="left:846px;top:562px" width="11" height="11" fill="#bcbcbc"><rect x="0" y="8" width="3" height="3"/><rect x="4" y="4" width="3" height="3"/><rect x="4" y="8" width="3" height="3"/><rect x="8" y="0" width="3" height="3"/><rect x="8" y="4" width="3" height="3"/><rect x="8" y="8" width="3" height="3"/></svg></div>
</body></html>
